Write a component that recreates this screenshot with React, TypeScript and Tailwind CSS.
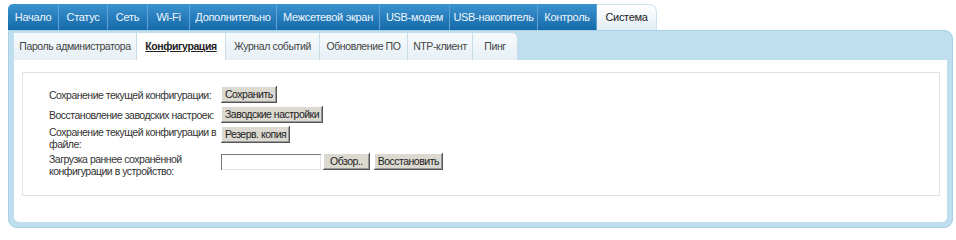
import React from "react";

const topTabs: [string, number][] = [
  ["Начало", 51],
  ["Статус", 49],
  ["Сеть", 40],
  ["Wi-Fi", 42],
  ["Дополнительно", 87],
  ["Межсетевой экран", 103],
  ["USB-модем", 70],
  ["USB-накопитель", 88],
  ["Контроль", 59],
];

const subTabs: [string, number][] = [
  ["Пароль администратора", 123],
  ["Конфигурация", 89],
  ["Журнал событий", 94],
  ["Обновление ПО", 88],
  ["NTP-клиент", 65],
  ["Пинг", 45],
];

function Btn({ children, wide }: { children: React.ReactNode; wide?: boolean }) {
  return (
    <button
      className={
        "h-[17px] bg-[#dcd9d1] text-[10.5px] tracking-[-0.5px] leading-none text-[#222] shadow-[inset_-1px_-1px_#555,inset_1px_1px_#fff,inset_-2px_-2px_#9a9a9a] " +
        (wide ? "px-[7px]" : "px-[4px]")
      }
    >
      {children}
    </button>
  );
}

export default function App() {
  return (
    <div className="w-[956px] h-[240px] bg-white font-['Liberation_Sans',Arial,sans-serif] text-[#333]">
      <div className="flex pl-[8px] pt-[4px] h-[30px]">
        {topTabs.map(([t, w], i) => (
          <div
            key={t}
            style={{ width: w }}
            className={
              "h-[26px] flex items-center justify-center text-[11px] tracking-[-0.3px] text-[#eef6fc] bg-gradient-to-b from-[#3a93cf] to-[#1469a8] border-r border-[#5da3d3] " +
              (i === 0 ? "rounded-tl-[5px]" : "")
            }
          >
            {t}
          </div>
        ))}
        <div className="w-[60px] h-[26px] flex items-center justify-center text-[11px] tracking-[-0.3px] text-[#222] bg-gradient-to-b from-[#ffffff] to-[#e2edf4] rounded-tr-[8px] border-t border-r border-[#cfe2ee]">
          Система
        </div>
      </div>
      <div className="ml-[8px] w-[945px] h-[198px] bg-[#bfdeee] rounded-tr-[9px] rounded-b-[9px] px-[6px] pb-[6px] pt-[3px] flex flex-col shadow-[inset_0_0_0_1px_#a9d0e6]">
        <div className="flex h-[27px]">
          {subTabs.map(([t, w], i) => (
            <div
              key={t}
              style={{ width: w }}
              className={
                "h-[27px] flex items-center justify-center text-[10.5px] tracking-[-0.4px] border-r border-[#c8dce8] " +
                (i === 1
                  ? "bg-white font-bold underline text-[#222]"
                  : "bg-gradient-to-b from-[#f7fafc] to-[#e6f0f6] text-[#444]") +
                (i === 5 ? " rounded-tr-[6px]" : "")
              }
            >
              {t}
            </div>
          ))}
        </div>
        <div className="flex-1 bg-white rounded-b-[5px] pt-[12px] pl-[8px] pr-[7px]">
          <div className="h-[124px] border border-[#e2e2e2] pl-[26px] pt-[13px]">
            <div className="grid grid-cols-[172px_auto] gap-y-[3px] text-[10.5px] tracking-[-0.5px] leading-[12px] text-[#333] items-center">
              <div>Сохранение текущей конфигурации:</div>
              <div className="flex">
                <Btn>Сохранить</Btn>
              </div>
              <div>Восстановление заводских настроек:</div>
              <div className="flex">
                <Btn>Заводские настройки</Btn>
              </div>
              <div className="self-start pr-[4px]">Сохранение текущей конфигурации в файле:</div>
              <div className="flex self-start">
                <Btn>Резерв. копия</Btn>
              </div>
              <div className="pr-[20px]">Загрузка раннее сохранённой конфигурации в устройство:</div>
              <div className="flex items-center self-start">
                <div className="w-[100px] h-[16px] mr-[2px] bg-white shadow-[inset_1px_1px_#7a7a7a,inset_-1px_-1px_#e6e6e6]" />
                <Btn wide>Обзор..</Btn>
                <div className="w-[4px]" />
                <Btn>Восстановить</Btn>
              </div>
            </div>
          </div>
        </div>
      </div>
    </div>
  );
}
